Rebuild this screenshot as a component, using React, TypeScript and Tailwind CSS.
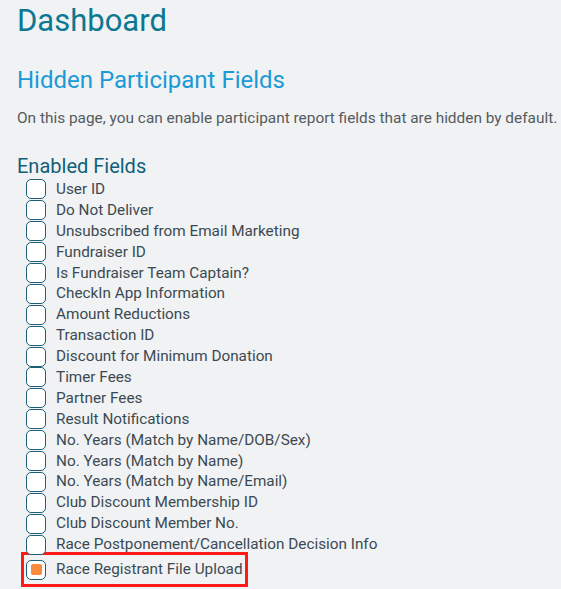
import React from 'react';

const fields = [
  'User ID',
  'Do Not Deliver',
  'Unsubscribed from Email Marketing',
  'Fundraiser ID',
  'Is Fundraiser Team Captain?',
  'CheckIn App Information',
  'Amount Reductions',
  'Transaction ID',
  'Discount for Minimum Donation',
  'Timer Fees',
  'Partner Fees',
  'Result Notifications',
  'No. Years (Match by Name/DOB/Sex)',
  'No. Years (Match by Name)',
  'No. Years (Match by Name/Email)',
  'Club Discount Membership ID',
  'Club Discount Member No.',
  'Race Postponement/Cancellation Decision Info',
];

const Box: React.FC<{ checked?: boolean }> = ({ checked }) => (
  <span className="flex h-[20px] w-[20px] shrink-0 items-center justify-center rounded-[5px] border-[1.5px] border-[#1d5f78] bg-white">
    {checked && <span className="h-[11px] w-[11px] rounded-[2px] bg-[#fb8a3c]" />}
  </span>
);

export default function App() {
  return (
    <div className="min-h-[589px] overflow-hidden bg-[#f1f2f4] pl-[17px] font-['Roboto',sans-serif]">
      <h1 className="pt-[3px] text-[31px] leading-[36px] text-[#0b7893]">Dashboard</h1>
      <h2 className="mt-[26px] text-[24px] leading-[30px] text-[#1a9ad6]">Hidden Participant Fields</h2>
      <p className="mt-[13px] whitespace-nowrap text-[15.4px] leading-[20px] text-[#555a5f]">
        On this page, you can enable participant report fields that are hidden by default.
      </p>
      <h3 className="mt-[26px] text-[20px] leading-[24px] text-[#0f5f7a]">Enabled Fields</h3>
      <ul className="pl-[9px] pt-[1px] text-[15.3px] text-[#3b4a52]">
        {fields.map((f) => (
          <li key={f} className="flex h-[20.9px] items-center gap-[10px] whitespace-nowrap">
            <Box />
            <span>{f}</span>
          </li>
        ))}
      </ul>
      <div className="-mt-[3px] ml-[4px] flex w-[227px] items-center gap-[10px] border-[3px] border-[#ff1a1a] py-[3px] pl-[2px] text-[15.3px] text-[#3b4a52]">
        <Box checked />
        <span className="whitespace-nowrap">Race Registrant File Upload</span>
      </div>
    </div>
  );
}
